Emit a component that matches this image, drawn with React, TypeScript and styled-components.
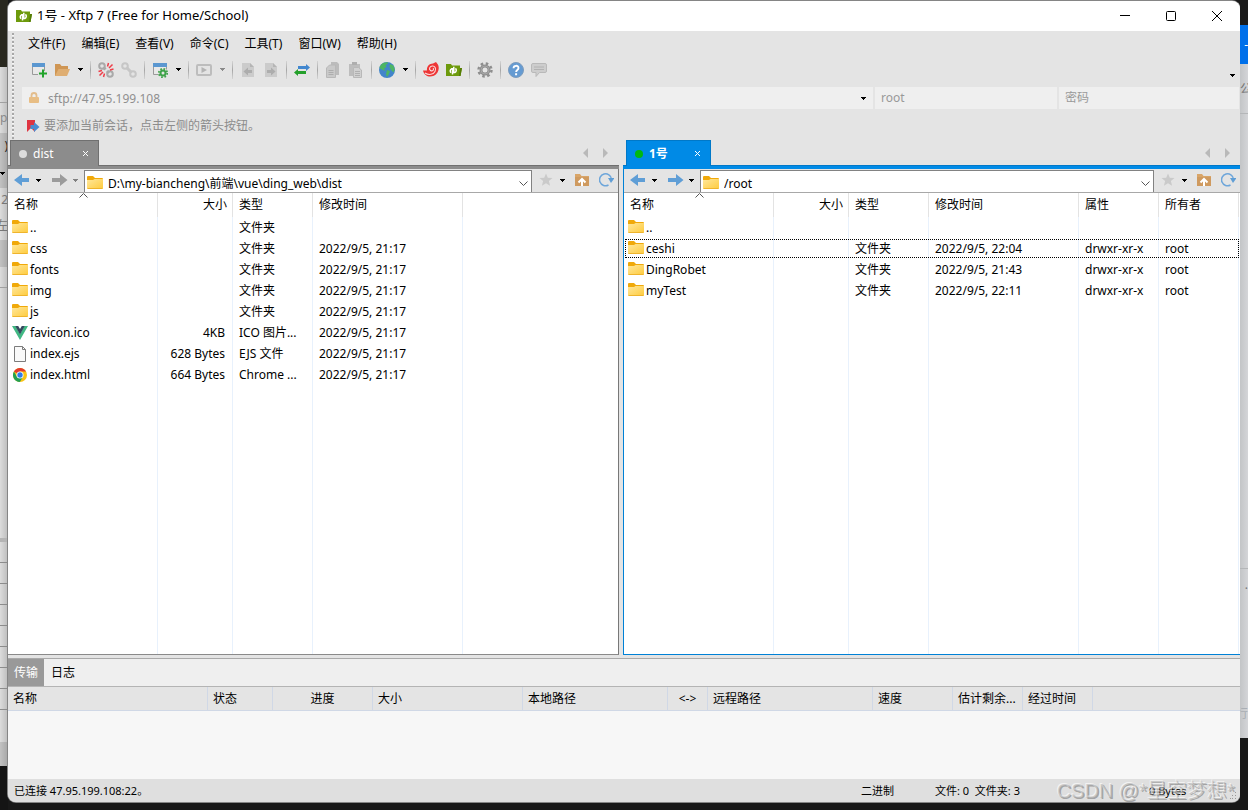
import React from "react";
import styled, { createGlobalStyle, css } from "styled-components";

const GlobalStyle = createGlobalStyle`
  *, *::before, *::after { box-sizing: border-box; }
  body {
    margin: 0;
    background: #181818;
    color: #000;
    font: 12px/16px "Noto Sans", "Noto Sans CJK SC", sans-serif;
  }
  button, input, table { font: inherit; color: inherit; }
  button { border: 0; padding: 0; background: none; }
  svg { display: block; flex: none; }
`;

/* ---------- desktop behind the window ---------- */

const Desktop = styled.div`
  display: grid;
  grid-template-columns: 8px minmax(0, 1fr) 8px;
  min-height: 100vh;
  background: #181818;
`;

const Edge = styled.div`
  display: flex;
  flex-direction: column;
  overflow: hidden;
`;

const Strip = styled.div<{ $h?: number; $bg: string; $line?: string; $color?: string; $end?: boolean }>`
  display: flex;
  align-items: center;
  justify-content: ${(p) => (p.$end ? "flex-end" : "flex-start")};
  flex: ${(p) => (p.$h ? `0 0 ${p.$h}px` : "1 0 0")};
  background: ${(p) => p.$bg};
  border-bottom: ${(p) => (p.$line ? `1px solid ${p.$line}` : "0")};
  color: ${(p) => p.$color ?? "#777"};
  white-space: nowrap;
  overflow: hidden;
`;

const LEFT = "linear-gradient(90deg, #dcdcdc, #bcbcbc)";
const LEFT_DARK = "linear-gradient(90deg, #c2c2c2, #a6a6a6)";
const RIGHT = "linear-gradient(90deg, #c3c5c7, #d4d5d8)";

const Window = styled.div`
  display: flex;
  flex-direction: column;
  margin: 1px 0 8px;
  border-radius: 8px;
  overflow: hidden;
  background: #e4e4e4;
  box-shadow: 0 0 0 1px #858585;
`;

/* ---------- title bar ---------- */

const TitleBar = styled.header`
  display: flex;
  align-items: center;
  gap: 5px;
  height: 30px;
  padding-left: 8px;
  background: #fff;
`;

const Title = styled.h1`
  flex: 1;
  margin: 0;
  padding-bottom: 2px;
  font-size: 13px;
  font-weight: 400;
`;

const WindowControls = styled.div`
  display: flex;
`;

const WindowButton = styled.button`
  display: grid;
  place-items: center;
  width: 46px;
  height: 30px;
`;

/* ---------- command area ---------- */

const Commands = styled.div`
  display: grid;
  grid-template-columns: 14px minmax(0, 1fr);
`;

const Grip = styled.div`
  width: 2px;
  margin: 2px 0 1px 4px;
  background: repeating-linear-gradient(#a8a8a8 0 2px, #f6f6f6 2px 3px, transparent 3px 4px);
`;

const MenuBar = styled.nav`
  display: flex;
  height: 26px;
  margin-left: -2px;
`;

const MenuButton = styled.button`
  padding: 0 8px;
`;

const ToolBar = styled.div`
  display: flex;
  align-items: center;
  height: 27px;
  padding: 0 0 2px 6px;
`;

const ToolButton = styled.button`
  width: 23px;
  height: 22px;
  padding: 0 4px 0 3px;
`;

const CaretButton = styled.button<{ $w?: number }>`
  display: grid;
  place-items: center;
  width: ${(p) => p.$w ?? 13}px;
  height: 22px;
`;

const OverflowButton = styled(CaretButton)`
  align-content: end;
  padding-bottom: 4px;
  margin-right: 1px;
`;

const Separator = styled.i`
  width: 1px;
  height: 18px;
  margin: 0 4px 0 3px;
  background: linear-gradient(#d4d4d4, #a6a6a6, #d4d4d4);
`;

const Spacer = styled.div`
  flex: 1;
`;

const SessionBar = styled.div`
  display: grid;
  grid-template-columns: minmax(0, 851fr) minmax(0, 182fr) minmax(0, 180fr);
  gap: 2px;
  margin: 3px 1px 0 0;
`;

const SessionField = styled.label`
  display: flex;
  align-items: center;
  gap: 8px;
  height: 22px;
  padding: 0 3px 0 6px;
  background: #efefef;
`;

const PlainInput = styled.input`
  flex: 1;
  min-width: 0;
  border: 0;
  padding: 0;
  outline: 0;
  background: none;
  color: #8f8f8f;
  &::placeholder { color: #999; opacity: 1; }
`;

const HostInput = styled(PlainInput)`
  padding-top: 2px;
`;

const Hint = styled.p`
  display: flex;
  align-items: center;
  gap: 4px;
  height: 31px;
  margin: 0;
  padding: 2px 0 0 4px;
  color: #8c8c8c;
`;

/* ---------- file panels ---------- */

const Panels = styled.main`
  display: grid;
  grid-template-columns: minmax(0, 611fr) minmax(0, 617fr);
  gap: 4px;
  flex: 1;
`;

type Tone = { $active: boolean };

const Panel = styled.section`
  display: flex;
  flex-direction: column;
`;

const TabRow = styled.div<Tone>`
  display: flex;
  height: 29px;
  padding: ${(p) => (p.$active ? "0 10px 0 3px" : "0 11px 0 2px")};
  background: linear-gradient(
    transparent 0 25px,
    ${(p) => (p.$active ? "#0078c8" : "#707070")} 25px 26px,
    ${(p) => (p.$active ? "#008ae6" : "#8c8c8c")} 26px 29px
  );
`;

const Tab = styled.div<Tone>`
  display: flex;
  align-items: center;
  width: ${(p) => (p.$active ? 85 : 89)}px;
  height: 26px;
  padding: 0 9px 0 8px;
  border: 1px solid ${(p) => (p.$active ? "#0078c8" : "#707070")};
  border-bottom: 0;
  background: ${(p) => (p.$active ? "#008ae6" : "#8c8c8c")};
  color: #fff;
  font-weight: ${(p) => (p.$active ? 700 : 400)};
`;

const Dot = styled.i<Tone>`
  width: 8px;
  height: 8px;
  margin-right: 6px;
  border-radius: 50%;
  background: ${(p) => (p.$active ? "#00b80f" : "#dcdcdc")};
`;

const TabClose = styled.button`
  margin-left: auto;
`;

const TabScroll = styled.button`
  width: 20px;
  height: 25px;
  display: grid;
  justify-content: end;
  align-content: center;
`;

const PanelBody = styled.div<Tone>`
  display: flex;
  flex-direction: column;
  flex: 1;
  ${(p) =>
    p.$active
      ? css`
          border-left: 1px solid #0081d6;
          border-bottom: 1px solid #0081d6;
        `
      : css`
          border-right: 1px solid #787878;
          border-bottom: 1px solid #8a8a8a;
        `}
`;

const NavBar = styled.div`
  display: flex;
  align-items: center;
  height: 24px;
  padding-left: 6px;
  border-bottom: 1px solid #a8a8a8;
`;

const NavButton = styled.button<{ $before?: number; $after?: number }>`
  padding: 0 ${(p) => p.$after ?? 0}px 2px ${(p) => p.$before ?? 0}px;
`;

const NavCaret = styled(CaretButton)`
  padding-bottom: 1px;
`;

const PathBox = styled.div`
  display: flex;
  align-items: center;
  flex: 1;
  height: 22px;
  align-self: flex-end;
  margin: 0 7px 0 2px;
  padding: 4px 3px 0 2px;
  gap: 5px;
  border: solid #828282;
  border-width: 1px 1px 0;
  background: #fff;
`;

const PathInput = styled(PlainInput)`
  color: #000;
`;

const NavTools = styled.div`
  display: flex;
  align-items: center;
  padding-right: 4px;
`;

const FileArea = styled.div`
  display: flex;
  flex: 1;
  background: #fff;
`;

const FileTable = styled.table`
  width: 100%;
  table-layout: fixed;
  border-collapse: separate;
  border-spacing: 0;
  white-space: nowrap;

  th, td {
    overflow: hidden;
    padding: 0 6px;
    text-align: left;
    font-weight: 400;
    border-right: 1px solid #e8f1fc;
  }
  th { height: 24px; border-color: #e3e3e3; }
  td { height: 21px; text-overflow: ellipsis; }
  th:last-child, td:last-child { border-right: 0; padding: 0; }
  td:first-child { padding-left: 4px; }
  th:nth-child(2) { text-align: right; padding-right: 5px; }
  td:nth-child(2) { text-align: right; padding-right: 7px; }
`;

const FileRow = styled.tr<{ $focused?: boolean }>`
  ${(p) => p.$focused && "outline: 1px dotted #000; outline-offset: -2px;"}
`;

const FillRow = styled.tr`
  td { height: auto; }
`;

const SortHead = styled.div`
  position: relative;
  height: 24px;
  line-height: 24px;
`;

const SortMark = styled.svg`
  position: absolute;
  top: 0;
  left: 65px;
`;

const FileName = styled.span`
  display: flex;
  align-items: center;
  gap: 2px;
`;

/* ---------- transfer pane ---------- */

const TransferPane = styled.section`
  margin-top: 3px;
  border-top: 1px solid #a9a9a9;
  background: #f7f7f7;
`;

const PaneTabs = styled.div`
  display: flex;
  gap: 1px;
  height: 28px;
  border-bottom: 1px solid #b4b4b4;
  background: #efefef;
`;

const PaneTab = styled.button<{ $active?: boolean }>`
  padding: 0 6px;
  background: ${(p) => (p.$active ? "#999" : "transparent")};
  color: ${(p) => (p.$active ? "#fff" : "#000")};
`;

const TransferTable = styled.table`
  width: 100%;
  table-layout: fixed;
  border-collapse: separate;
  border-spacing: 0;
  background: #e4e4e4;
  white-space: nowrap;
  th {
    height: 24px;
    padding: 0 5px;
    overflow: hidden;
    text-overflow: ellipsis;
    font-weight: 400;
    border-bottom: 1px solid #d0d8e6;
    border-right: 1px solid #d0d8e6;
  }
  th:last-child { border-right: 0; }
`;

const TransferHead = styled.th<{ $center?: boolean }>`
  text-align: ${(p) => (p.$center ? "center" : "left")};
`;

const TransferEmpty = styled.div`
  height: 68px;
`;

const StatusBar = styled.footer`
  position: relative;
  display: flex;
  align-items: center;
  height: 23px;
  padding-left: 6px;
  background: #dfdfdf;
  font-size: 11px;
  white-space: pre;
`;

const StatusCell = styled.span<{ $w?: number }>`
  flex: ${(p) => (p.$w ? `0 0 ${p.$w}px` : "1")};
`;

const Watermark = styled.div`
  position: absolute;
  right: 5px;
  bottom: 0;
  color: rgba(175, 175, 175, 0.55);
  font: 300 20px/22px "Liberation Sans", "Noto Sans CJK SC", sans-serif;
  text-shadow: -1px -1px 0 rgba(255, 255, 255, 0.6), 1px 1px 0 rgba(90, 90, 90, 0.45);
  pointer-events: none;
`;

const ResizeGrip = styled.svg`
  position: absolute;
  right: 3px;
  bottom: 3px;
`;

/* ---------- icons ---------- */

const Svg = ({ children, w = 16, h = 16 }: { children: React.ReactNode; w?: number; h?: number }) => (
  <svg width={w} height={h} viewBox={`0 0 ${w} ${h}`} fill="none" aria-hidden="true">
    {children}
  </svg>
);

const Caret = ({ color = "#000" }: { color?: string }) => (
  <Svg w={5} h={3}>
    <path d="M0 0h5v1H4v1H3v1H2V2H1V1H0z" fill={color} />
  </Svg>
);

const XftpIcon = () => (
  <Svg>
    <path d="M0 2h5l1 1.5h8V6h2l-1.5 8H0z" fill="#6d9a0c" />
    <path d="M14 6h2l-1.5 8H13z" fill="#557c05" />
    <path d="M6.5 12.5V6.800h-1a2.400 2.400 0 0 0-.5 3.900M7.800 4.800v5.800h1a2.500 2.500 0 0 0 .6-4.200" stroke="#fff" strokeWidth="1.5" />
  </Svg>
);

const WindowPlus = () => (
  <Svg>
    <path d="M1.500 1.500h12v11h-12z" fill="#e9e9e9" stroke="#9a9a9a" />
    <path d="M1 1h13v4H1z" fill="#5b97d0" />
    <path d="M7 9h9v6H7z" fill="#e4e4e4" />
    <path d="M12 7.500v8M8 11.500h8" stroke="#21a32b" strokeWidth="2" />
  </Svg>
);

const FolderOpen = () => (
  <Svg>
    <path d="M1 2h5l1.500 2H14v3H6l-3 7H1z" fill="#cf9654" />
    <path d="M4.500 7H16l-3 7H1z" fill="#dfae72" />
  </Svg>
);

const Chain = ({ broken = false }: { broken?: boolean }) => (
  <Svg>
    <g stroke={broken ? "#a9a9a9" : "#c6c6c6"} strokeWidth="2">
      <circle cx="4" cy="4" r="2.800" />
      <circle cx="12" cy="12" r="2.800" />
      {!broken && <path d="M5.500 5.500l5 5" strokeWidth="3" />}
      {broken && <path d="M5.500 5.500l2 2M9 9l2 2" strokeWidth="3" />}
    </g>
    {broken && (
      <path d="M9.500 4.500L10.500 1M11 6l3.500-3.500M12 8l3.500-1M6.500 11.500l-1 3.500M5 10l-3.500 3.500M4 8.500L.5 9.500" stroke="#ee3f4a" strokeWidth="1.500" />
    )}
  </Svg>
);

const WindowGear = () => (
  <Svg>
    <path d="M1.500 1.500h13v11h-13z" fill="#e9e9e9" stroke="#9a9a9a" />
    <path d="M1 1h14v4H1z" fill="#5b97d0" />
    <circle cx="11" cy="11" r="5" fill="#e4e4e4" />
    <circle cx="11" cy="11" r="2.500" stroke="#3fa34a" strokeWidth="2" />
    <circle cx="11" cy="11" r="4.200" stroke="#3fa34a" strokeWidth="1.800" strokeDasharray="1.650 1.650" />
  </Svg>
);

const PlayBox = () => (
  <Svg>
    <rect x="1" y="3" width="14" height="10" rx="1" stroke="#bdbdbd" strokeWidth="2" />
    <path d="M5.500 5l5.500 3-5.500 3z" fill="#b4b4b4" />
  </Svg>
);

const DocArrow = ({ right = false }: { right?: boolean }) => (
  <Svg>
    <path d="M2 1h8l4 4v10H2z" fill="#cbcbcb" />
    <path d="M10 1l4 4h-4z" fill="#b5b5b5" />
    <path d={right ? "M4 8h4V5.500l4.500 4-4.500 4V11H4z" : "M12 8H8V5.500l-4.500 4 4.500 4V11h4z"} fill="#adadad" />
  </Svg>
);

const Transfer = () => (
  <Svg>
    <path d="M4 4h8V2l4 3.500L12 9V7H4z" fill="#4287cf" />
    <path d="M12 9H4V7L0 10.500 4 14v-2h8z" fill="#25a02b" />
  </Svg>
);

const CopyDocs = () => (
  <Svg>
    <path d="M6 0h6l2 2v11H6z" fill="#bcbcbc" />
    <path d="M1.500 6l3-3h6v12.500h-9z" fill="#c9c9c9" stroke="#b8b8b8" />
    <path d="M3.500 8.500h5M3.500 10.500h5M3.500 12.500h5" stroke="#adadad" />
  </Svg>
);

const Paste = () => (
  <Svg>
    <path d="M1 2h11v12H1z" fill="#bdbdbd" />
    <path d="M4 0h5v3H4z" fill="#aeaeae" />
    <path d="M5.500 5.500h5l3 2.500v7.500h-8z" fill="#d0d0d0" stroke="#b8b8b8" />
    <path d="M7 9.500h5M7 11.500h5M7 13.500h5" stroke="#b0b0b0" />
  </Svg>
);

const Globe = () => (
  <Svg>
    <circle cx="8" cy="8" r="8" fill="#4285cb" />
    <path d="M2 2.700C4 .6 7 0 9 .3L8.500 2 6.500 3l1 2L5 6.500 6.500 9 4 8 1 6.500.5 5zM8 8l3 1-1 3-2 3-1-3zM11 2l3.500 1.500 1.300 4-1.300 3L12 8l-1.500-3z" fill="#4db564" />
  </Svg>
);

const Shell = () => (
  <Svg>
    <path d="M0 8.500h4C3.500 5 6 1.500 10 1.500l3-1.500 1.500 2C16 4 16.300 7.500 14.500 10.500 12.500 13.500 9.500 14.500 7 14.500 4 14.500 1 12.500 0 8.500z" fill="#ee3636" />
    <path d="M2 11c4 2.500 8.500 1.500 10-1.500 1.500-3-.2-5.800-2.800-5.500S5.600 7.200 7.500 8.500s4-1 2.500-2.200" stroke="#fbdcdc" strokeWidth="1.100" />
  </Svg>
);

const Gear = () => (
  <Svg>
    <circle cx="8" cy="8" r="4" stroke="#8e8e8e" strokeWidth="3" />
    <circle cx="8" cy="8" r="6.500" stroke="#8e8e8e" strokeWidth="2.400" strokeDasharray="2.550 2.550" />
    <circle cx="8" cy="8" r="4" stroke="#a8a8a8" />
  </Svg>
);

const Help = () => (
  <Svg>
    <circle cx="8" cy="8" r="7.500" fill="#659bd2" stroke="#7d9cbd" />
    <path d="M5.500 6.200C5.500 3 10.500 3 10.500 6c0 2-2.400 2-2.400 4" stroke="#fff" strokeWidth="1.800" />
    <path d="M7.100 11.200h2v2h-2z" fill="#fff" />
  </Svg>
);

const Chat = () => (
  <Svg>
    <path d="M2 1.500h12q1.500 0 1.500 1.500v6q0 1.500-1.500 1.500H8.500L5 14.500v-4H2Q.500 10.500.500 9V3Q.500 1.500 2 1.500z" fill="#cdcdcd" stroke="#b9b9b9" />
    <path d="M3 5h10M3 7.500h10" stroke="#b2b2b2" />
  </Svg>
);

const Lock = () => (
  <Svg w={12} h={12}>
    <path d="M3.500 6V3.500a2.500 2.500 0 0 1 5 0V6" stroke="#e3bd8c" strokeWidth="1.800" />
    <rect x="1" y="5" width="10" height="6" rx="1" fill="#e8be85" />
  </Svg>
);

const Bookmark = () => (
  <Svg w={14} h={14}>
    <path d="M1 1h8v12L5 9l-4 4z" fill="#df3441" />
    <path d="M4.500 6H8V3l5.500 5L8 13v-3H4.500z" fill="#4b8bd0" />
  </Svg>
);

const Folder = () => (
  <Svg>
    <defs>
      <linearGradient id="folderFace" x1="0" y1="0" x2="1" y2="1">
        <stop offset="0" stopColor="#ffe79b" />
        <stop offset="1" stopColor="#fecb3d" />
      </linearGradient>
    </defs>
    <path d="M0 1q0-1 1-1h5l2 2h7q1 0 1 1v4H0z" fill="#f0a90a" />
    <path d="M0 4h6l1.500-1H16v9q0 1-1 1H1q-1 0-1-1z" fill="url(#folderFace)" />
    <path d="M.5 12.500h15" stroke="#efb42c" />
  </Svg>
);

const VueIcon = () => (
  <Svg>
    <path d="M0 1h3.500L8 9l4.500-8H16L8 15z" fill="#41b883" />
    <path d="M3.200 1h3L8 4l1.800-3h3L8 9.500z" fill="#35495e" />
  </Svg>
);

const PageIcon = () => (
  <Svg>
    <path d="M2.500.500h8l3 3v12h-11z" fill="#fafafa" stroke="#7c7c7c" />
    <path d="M10.500.500v3h3" stroke="#7c7c7c" />
  </Svg>
);

const ChromeIcon = () => (
  <Svg>
    <circle cx="8" cy="8" r="7" fill="#f9c313" />
    <path d="M8 8L1.900 4.500A7 7 0 0 1 14.100 4.500H8z" fill="#e33b2e" />
    <path d="M1.900 4.500A7 7 0 0 0 7.800 15L11 9.700 8 8 5 9.700z" fill="#22a052" />
    <circle cx="8" cy="8" r="3.500" fill="#fff" />
    <circle cx="8" cy="8" r="2.700" fill="#2f7de9" />
  </Svg>
);

const NavArrow = ({ forward = false, disabled = false }: { forward?: boolean; disabled?: boolean }) => (
  <Svg>
    <path
      d={forward ? "M0 6h8V2l7.500 6L8 14v-4H0z" : "M15 6H8V2L0 8l8 6v-4h7z"}
      fill={disabled ? "#9b9b9b" : "#5f9ed6"}
    />
  </Svg>
);

const StarIcon = () => (
  <Svg w={14} h={14}>
    <path d="M7 .5l1.800 4.300 4.700.3-3.600 3 1.200 4.600L7 10.200l-4.100 2.500 1.200-4.600-3.600-3 4.700-.3z" fill="#cacaca" />
  </Svg>
);

const UpFolder = () => (
  <Svg w={14} h={14}>
    <path d="M0 1h5l1.500 2H14v10H0z" fill="#d9a568" />
    <path d="M0 4h14v9H0z" fill="#cf9a5f" />
    <path d="M7 13V7M3.500 9.500L7 6l3.500 3.500" stroke="#fff" strokeWidth="2" />
  </Svg>
);

const Refresh = () => (
  <Svg w={15} h={15}>
    <path d="M9.500 13A6 6 0 1 1 12.500 7" stroke="#6ea6da" strokeWidth="1.500" />
    <path d="M9 6h6.500L12 11z" fill="#5f9ed6" />
  </Svg>
);

const Chevron = () => (
  <Svg w={9} h={6}>
    <path d="M.5.500l4 4 4-4" stroke="#555" />
  </Svg>
);

/* ---------- data ---------- */

const menus = ["文件(F)", "编辑(E)", "查看(V)", "命令(C)", "工具(T)", "窗口(W)", "帮助(H)"];

type Tool = { label: string; icon: React.ReactNode; caret?: string };

const toolGroups: Tool[][] = [
  [
    { label: "新建", icon: <WindowPlus /> },
    { label: "打开", icon: <FolderOpen />, caret: "#000" },
  ],
  [
    { label: "断开", icon: <Chain broken /> },
    { label: "重新连接", icon: <Chain /> },
  ],
  [{ label: "属性", icon: <WindowGear />, caret: "#000" }],
  [{ label: "执行", icon: <PlayBox />, caret: "#8a8a8a" }],
  [
    { label: "向左传输", icon: <DocArrow /> },
    { label: "向右传输", icon: <DocArrow right /> },
  ],
  [{ label: "同步", icon: <Transfer /> }],
  [
    { label: "复制", icon: <CopyDocs /> },
    { label: "粘贴", icon: <Paste /> },
  ],
  [{ label: "语言", icon: <Globe />, caret: "#000" }],
  [
    { label: "Xshell", icon: <Shell /> },
    { label: "Xftp", icon: <XftpIcon /> },
  ],
  [{ label: "选项", icon: <Gear /> }],
  [
    { label: "帮助", icon: <Help /> },
    { label: "反馈", icon: <Chat /> },
  ],
];

type FileItem = { icon: React.ReactNode; cells: string[]; focused?: boolean };

type PanelData = {
  tab: string;
  path: string;
  active: boolean;
  columns: [string, number][];
  files: FileItem[];
};

const localPanel: PanelData = {
  tab: "dist",
  path: "D:\\my-biancheng\\前端\\vue\\ding_web\\dist",
  active: false,
  columns: [["名称", 150], ["大小", 75], ["类型", 80], ["修改时间", 150]],
  files: [
    { icon: <Folder />, cells: ["..", "", "文件夹", ""] },
    { icon: <Folder />, cells: ["css", "", "文件夹", "2022/9/5, 21:17"] },
    { icon: <Folder />, cells: ["fonts", "", "文件夹", "2022/9/5, 21:17"] },
    { icon: <Folder />, cells: ["img", "", "文件夹", "2022/9/5, 21:17"] },
    { icon: <Folder />, cells: ["js", "", "文件夹", "2022/9/5, 21:17"] },
    { icon: <VueIcon />, cells: ["favicon.ico", "4KB", "ICO 图片...", "2022/9/5, 21:17"] },
    { icon: <PageIcon />, cells: ["index.ejs", "628 Bytes", "EJS 文件", "2022/9/5, 21:17"] },
    { icon: <ChromeIcon />, cells: ["index.html", "664 Bytes", "Chrome ...", "2022/9/5, 21:17"] },
  ],
};

const remotePanel: PanelData = {
  tab: "1号",
  path: "/root",
  active: true,
  columns: [["名称", 150], ["大小", 75], ["类型", 80], ["修改时间", 150], ["属性", 80], ["所有者", 80]],
  files: [
    { icon: <Folder />, cells: ["..", "", "", "", "", ""] },
    { icon: <Folder />, cells: ["ceshi", "", "文件夹", "2022/9/5, 22:04", "drwxr-xr-x", "root"], focused: true },
    { icon: <Folder />, cells: ["DingRobet", "", "文件夹", "2022/9/5, 21:43", "drwxr-xr-x", "root"] },
    { icon: <Folder />, cells: ["myTest", "", "文件夹", "2022/9/5, 22:11", "drwxr-xr-x", "root"] },
  ],
};

const transferColumns: [string, number, boolean?][] = [
  ["名称", 200],
  ["状态", 65],
  ["进度", 100, true],
  ["大小", 150],
  ["本地路径", 145],
  ["<->", 40, true],
  ["远程路径", 165],
  ["速度", 80],
  ["估计剩余...", 70],
  ["经过时间", 70],
];

/* ---------- parts ---------- */

const FilePanel = ({ tab, path, active, columns, files }: PanelData) => (
  <Panel>
    <TabRow $active={active}>
      <Tab $active={active}>
        <Dot $active={active} />
        {tab}
        <TabClose aria-label="关闭标签">
          <Svg w={7} h={7}>
            <path d="M1 1l5 5M6 1L1 6" stroke="#fff" />
          </Svg>
        </TabClose>
      </Tab>
      <Spacer />
      <TabScroll aria-label="上一个">
        <Svg w={5} h={10}>
          <path d="M5 0v10L0 5z" fill="#b9b9b9" />
        </Svg>
      </TabScroll>
      <TabScroll aria-label="下一个">
        <Svg w={5} h={10}>
          <path d="M0 0v10l5-5z" fill="#b9b9b9" />
        </Svg>
      </TabScroll>
    </TabRow>
    <PanelBody $active={active}>
      <NavBar>
        <NavButton aria-label="后退"><NavArrow /></NavButton>
        <NavCaret $w={17} aria-label="后退历史"><Caret /></NavCaret>
        <NavButton $before={5} aria-label="前进"><NavArrow forward disabled={!active} /></NavButton>
        <NavCaret $w={14} aria-label="前进历史"><Caret color={active ? "#000" : "#808080"} /></NavCaret>
        <PathBox>
          <Folder />
          <PathInput aria-label="路径" defaultValue={path} />
          <button aria-label="展开路径"><Chevron /></button>
        </PathBox>
        <NavTools>
          <NavButton aria-label="书签"><StarIcon /></NavButton>
          <NavCaret $w={19} aria-label="书签列表"><Caret /></NavCaret>
          <NavButton $before={3} $after={10} aria-label="上级目录"><UpFolder /></NavButton>
          <NavButton aria-label="刷新"><Refresh /></NavButton>
        </NavTools>
      </NavBar>
      <FileArea>
        <FileTable>
          <colgroup>
            {columns.map(([name, width]) => <col key={name} width={width} />)}
            <col />
          </colgroup>
          <thead>
            <tr>
              {columns.map(([name], i) => (
                <th key={name} scope="col">
                  {i === 0 ? (
                    <SortHead>
                      {name}
                      <SortMark width="9" height="5" viewBox="0 0 9 5" fill="none" aria-hidden="true">
                        <path d="M.5 4.500l4-4 4 4" stroke="#555" />
                      </SortMark>
                    </SortHead>
                  ) : (
                    name
                  )}
                </th>
              ))}
              <th aria-hidden="true" />
            </tr>
          </thead>
          <tbody>
            {files.map((file) => (
              <FileRow key={file.cells[0]} $focused={file.focused}>
                {file.cells.map((cell, i) => (
                  <td key={i}>{i === 0 ? <FileName>{file.icon}{cell}</FileName> : cell}</td>
                ))}
                <td />
              </FileRow>
            ))}
            <FillRow aria-hidden="true">
              {columns.map(([name]) => <td key={name} />)}
              <td />
            </FillRow>
          </tbody>
        </FileTable>
      </FileArea>
    </PanelBody>
  </Panel>
);

export default function App() {
  return (
    <>
      <GlobalStyle />
      <Desktop lang="zh-CN">
        <Edge aria-hidden="true">
          <Strip $h={67} $bg="#29281f" />
          <Strip $h={36} $bg={LEFT} $line="#a0a0a0" />
          <Strip $h={30} $bg={LEFT} $color="#8a8a8a">p</Strip>
          <Strip $h={26} $bg={LEFT_DARK} $color="#222" $end>)</Strip>
          <Strip $h={29} $bg={LEFT_DARK}><Caret /></Strip>
          <Strip $h={23} $bg={LEFT} $end>2</Strip>
          <Strip $h={29} $bg={LEFT} $end>左</Strip>
          <Strip $h={27} $bg={LEFT_DARK} />
          <Strip $h={21} $bg={LEFT} $line="#a0a0a0" />
          <Strip $h={250} $bg={LEFT} />
          <Strip $h={4} $bg="#b4b4b4" />
          {Array.from({ length: 8 }, (_, i) => (
            <Strip key={i} $h={21} $bg={LEFT} $line="#8c8c8c" />
          ))}
          <Strip $h={32} $bg={LEFT} />
          <Strip $h={24} $bg={LEFT_DARK} />
          <Strip $bg="#141414" />
        </Edge>

        <Window>
          <TitleBar>
            <XftpIcon />
            <Title>1号 - Xftp 7 (Free for Home/School)</Title>
            <WindowControls>
              <WindowButton aria-label="最小化">
                <Svg w={10} h={10}><path d="M0 4.500h10" stroke="#000" /></Svg>
              </WindowButton>
              <WindowButton aria-label="最大化">
                <Svg w={10} h={10}><rect x=".5" y=".5" width="9" height="9" rx="1" stroke="#000" /></Svg>
              </WindowButton>
              <WindowButton aria-label="关闭">
                <Svg w={10} h={10}><path d="M0 0l10 10M10 0L0 10" stroke="#000" /></Svg>
              </WindowButton>
            </WindowControls>
          </TitleBar>

          <Commands>
            <Grip />
            <div>
              <MenuBar>
                {menus.map((m) => <MenuButton key={m}>{m}</MenuButton>)}
              </MenuBar>
              <ToolBar role="toolbar">
                {toolGroups.map((group, i) => (
                  <React.Fragment key={i}>
                    {i > 0 && <Separator />}
                    {group.map((t) => (
                      <React.Fragment key={t.label}>
                        <ToolButton aria-label={t.label}>{t.icon}</ToolButton>
                        {t.caret && (
                          <CaretButton aria-label={`${t.label}选项`}><Caret color={t.caret} /></CaretButton>
                        )}
                      </React.Fragment>
                    ))}
                  </React.Fragment>
                ))}
                <Spacer />
                <OverflowButton aria-label="更多"><Caret /></OverflowButton>
              </ToolBar>
              <SessionBar>
                <SessionField>
                  <Lock />
                  <HostInput aria-label="主机" defaultValue="sftp://47.95.199.108" />
                  <CaretButton aria-label="历史记录"><Caret /></CaretButton>
                </SessionField>
                <SessionField>
                  <PlainInput aria-label="用户名" placeholder="root" />
                </SessionField>
                <SessionField>
                  <PlainInput aria-label="密码" type="password" placeholder="密码" />
                </SessionField>
              </SessionBar>
              <Hint><Bookmark />要添加当前会话，点击左侧的箭头按钮。</Hint>
            </div>
          </Commands>

          <Panels>
            <FilePanel {...localPanel} />
            <FilePanel {...remotePanel} />
          </Panels>

          <TransferPane>
            <PaneTabs>
              <PaneTab $active>传输</PaneTab>
              <PaneTab>日志</PaneTab>
            </PaneTabs>
            <TransferTable>
              <colgroup>
                {transferColumns.map(([name, width]) => <col key={name} width={width} />)}
                <col />
              </colgroup>
              <thead>
                <tr>
                  {transferColumns.map(([name, , center]) => (
                    <TransferHead key={name} scope="col" $center={center}>{name}</TransferHead>
                  ))}
                  <th aria-hidden="true" />
                </tr>
              </thead>
            </TransferTable>
            <TransferEmpty />
          </TransferPane>

          <StatusBar>
            <StatusCell>已连接 47.95.199.108:22。</StatusCell>
            <StatusCell $w={74}>二进制</StatusCell>
            <StatusCell $w={214}>{"文件: 0  文件夹: 3"}</StatusCell>
            <StatusCell $w={91}>0 Bytes</StatusCell>
            <ResizeGrip width="7" height="7" viewBox="0 0 7 7" aria-hidden="true">
              <path d="M5 0h1v1H5zM5 3h1v1H5zM5 6h1v1H5zM2 3h1v1H2zM2 6h1v1H2zM0 6h1v1H0z" fill="#999" />
            </ResizeGrip>
            <Watermark>CSDN @*星空梦想*</Watermark>
          </StatusBar>
        </Window>

        <Edge aria-hidden="true">
          <Strip $h={25} $bg="#1a1a1a" />
          <Strip $h={39} $bg="#0070ea" $color="#fff" $end>-</Strip>
          <Strip $h={50} $bg={RIGHT} $line="#b4b6b8">公</Strip>
          <Strip $h={455} $bg={RIGHT} $line="#b4b6b8" />
          <Strip $h={40} $bg={RIGHT} $end>·</Strip>
          <Strip $h={80} $bg={RIGHT} />
          <Strip $h={49} $bg={RIGHT} $color="#a9aeb4" $end>行</Strip>
          <Strip $bg="#181818" />
        </Edge>
      </Desktop>
    </>
  );
}
